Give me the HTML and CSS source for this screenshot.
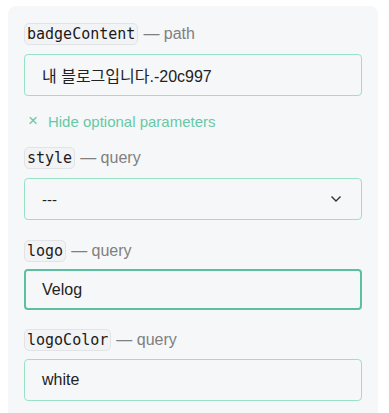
FILE: index.html
```html
<!DOCTYPE html>
<html>
<head>
	<meta charset=utf-8>
	<title>Badge parameters</title>
	<link rel="stylesheet" href="styles.css">
</head>
<body>
	<div class="card">
		<div class="param">
			<div class="label"><code>badgeContent</code><span class="kind">— path</span></div>
			<div class="field">내 블로그입니다.-20c997</div>
		</div>

		<div class="toggle"><span class="x">×</span>Hide optional parameters</div>

		<div class="param">
			<div class="label"><code>style</code><span class="kind">— query</span></div>
			<div class="field select">
				<span class="dashes">---</span>
				<svg width="12" height="8" viewBox="0 0 12 8"><path d="M1.5 1.5 L6 6 L10.5 1.5" fill="none" stroke="#333" stroke-width="1.4"/></svg>
			</div>
		</div>

		<div class="param active">
			<div class="label"><code>logo</code><span class="kind">— query</span></div>
			<div class="field focus">Velog</div>
		</div>

		<div class="param last">
			<div class="label"><code>logoColor</code><span class="kind">— query</span></div>
			<div class="field">white</div>
		</div>
	</div>
</body>
</html>
```

FILE: styles.css
```css
body{
	margin: 0;
	background: #fff;
	font-family: "Liberation Sans", "Noto Sans CJK KR", sans-serif;
}
.card{
	margin: 6px 11px 0 8px;
	padding: 17px 16px 12px 16px;
	background: #f6f7f9;
	border-radius: 8px;
}
.param{
	margin-bottom: 20px;
}
.label{
	display: flex;
	align-items: center;
	height: 22px;
	margin-bottom: 9px;
}
.active .label{
	margin-bottom: 7px;
}
.active{
	margin-bottom: 19px;
}
.last .label{
	margin-bottom: 8px;
}
code{
	font-family: "DejaVu Sans Mono", monospace;
	font-size: 15px;
	line-height: 20px;
	color: #1a1a1a;
	background: #f2f3f5;
	border: 1px solid #e2e3e6;
	border-radius: 5px;
	padding: 0 2px;
}
.kind{
	margin-left: 5px;
	font-size: 16px;
	color: #808080;
}
.field{
	box-sizing: border-box;
	height: 42px;
	border: 1px solid #98e2c6;
	border-radius: 4px;
	padding: 0 17px;
	display: flex;
	align-items: center;
	font-size: 16px;
	color: #222;
}
.field.focus{
	height: 41px;
	border: 2px solid #5cc0a0;
	padding-left: 16px;
}
.select{
	justify-content: space-between;
	padding-right: 19px;
}
.dashes{
	font-size: 15px;
}
.toggle{
	display: flex;
	align-items: center;
	height: 20px;
	margin: -5px 0 16px 4px;
	color: #66c9a5;
	font-size: 15px;
}
.x{
	font-size: 17px;
	margin-right: 10px;
}
```
